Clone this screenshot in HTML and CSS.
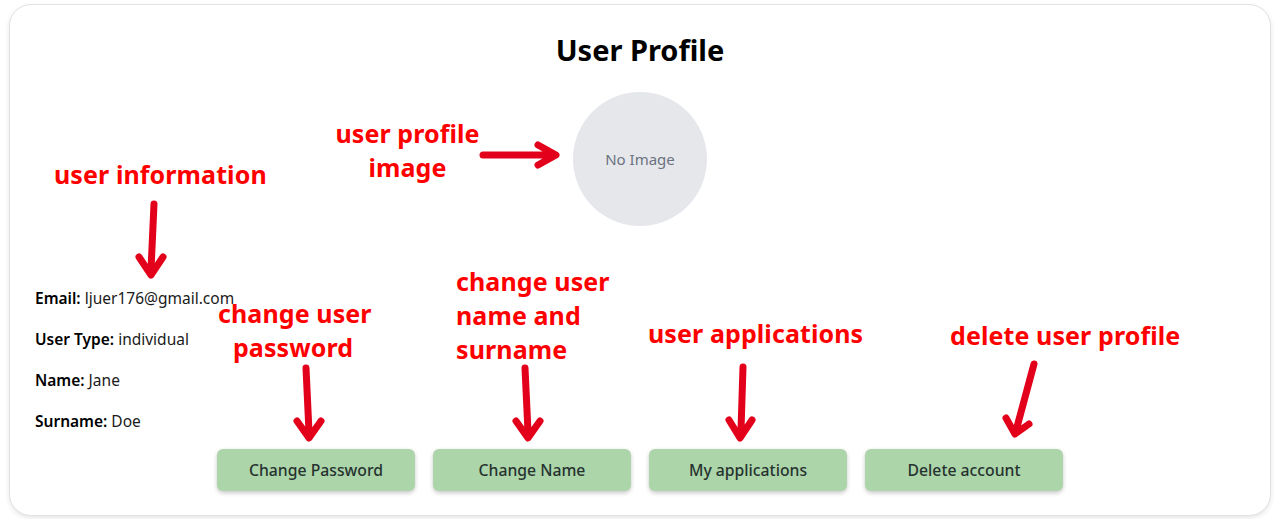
FILE: index.html
```html
<!DOCTYPE html>
<html lang="en">
<head>
  <meta charset="UTF-8">
  <meta name="viewport" content="width=device-width, initial-scale=1.0">
  <title>User Profile</title>
  <link rel="stylesheet" href="styles.css">
</head>
<body>
  <div class="profile-card">
    <h1 class="profile-title">User Profile</h1>

    <div class="avatar">No Image</div>

    <div class="user-info">
      <p><strong>Email:</strong> ljuer176@gmail.com</p>
      <p><strong>User Type:</strong> individual</p>
      <p><strong>Name:</strong> Jane</p>
      <p><strong>Surname:</strong> Doe</p>
    </div>

    <div class="button-row">
      <button class="btn">Change Password</button>
      <button class="btn">Change Name</button>
      <button class="btn">My applications</button>
      <button class="btn">Delete account</button>
    </div>
  </div>

  <!-- annotations drawn over the screenshot -->
  <div class="note note-image">user profile<br>image</div>
  <div class="note note-info">user information</div>
  <div class="note note-password">change user<br>password</div>
  <div class="note note-name">change user<br>name and<br>surname</div>
  <div class="note note-apps">user applications</div>
  <div class="note note-delete">delete user profile</div>

  <svg class="arrows" width="1280" height="519" viewBox="0 0 1280 519">
    <g fill="none" stroke="#e3001b" stroke-width="7" stroke-linecap="round" stroke-linejoin="round">
      <path d="M483 155 L553 155 M538 145 L556 155 L538 165"/>
      <path d="M154 204 L151 270 M139 257 L151 275 L163 257"/>
      <path d="M306 368 L309 432 M297 421 L309 438 L321 421"/>
      <path d="M525 368 L528 432 M516 421 L528 438 L540 421"/>
      <path d="M743 367 L741 430 M729 420 L740 438 L752 420"/>
      <path d="M1034 364 L1017 427 M1006 418 L1015 434 L1029 424"/>
    </g>
  </svg>
</body>
</html>
```

FILE: styles.css
```css
body {
  margin: 0;
  background-color: #fff;
  font-family: "Noto Sans", Arial, sans-serif;
  position: relative;
  height: 519px;
  overflow: hidden;
}

.profile-card {
  margin: 4px 9px 0;
  padding: 20px 25px 24px;
  background-color: #fff;
  border: 1px solid #e2e2e2;
  border-radius: 22px;
  box-shadow: 0 2px 5px rgba(0, 0, 0, 0.1);
}

.profile-title {
  margin: 0;
  font-size: 29px;
  line-height: 50px;
  font-weight: bold;
  text-align: center;
  color: #000;
}

.avatar {
  width: 134px;
  height: 134px;
  margin: 17px auto 0;
  border-radius: 50%;
  background-color: #e5e7eb;
  color: #6b7280;
  font-size: 15px;
  display: flex;
  align-items: center;
  justify-content: center;
}

.user-info {
  margin-top: 61px;
  display: flex;
  flex-direction: column;
  gap: 19px;
  font-size: 15.5px;
  color: #1a1a1a;
}

.user-info p {
  margin: 0;
  line-height: 22px;
}

.user-info strong {
  font-weight: 600;
  color: #000;
}

.button-row {
  display: flex;
  justify-content: center;
  gap: 18px;
  margin-top: 17px;
}

.btn {
  width: 198px;
  height: 42px;
  border: none;
  border-radius: 6px;
  background-color: #acd5aa;
  color: #26332f;
  font-family: "Noto Sans", Arial, sans-serif;
  font-size: 15.75px;
  font-weight: 500;
  box-shadow: 0 2px 4px rgba(0, 0, 0, 0.22);
  cursor: pointer;
}

.note {
  position: absolute;
  color: #f00;
  font-family: "Noto Sans", Arial, sans-serif;
  font-weight: bold;
  font-size: 25px;
  letter-spacing: 0.1px;
  line-height: 34px;
  white-space: nowrap;
}

.note-image {
  left: 334px;
  top: 116px;
  width: 147px;
  text-align: center;
}

.note-info {
  left: 54px;
  top: 157px;
}

.note-password {
  left: 218px;
  top: 296px;
  width: 150px;
  text-align: center;
}

.note-name {
  left: 456px;
  top: 264px;
}

.note-apps {
  left: 648px;
  top: 316px;
}

.note-delete {
  left: 950px;
  top: 318px;
}

.arrows {
  position: absolute;
  left: 0;
  top: 0;
  pointer-events: none;
}
```
